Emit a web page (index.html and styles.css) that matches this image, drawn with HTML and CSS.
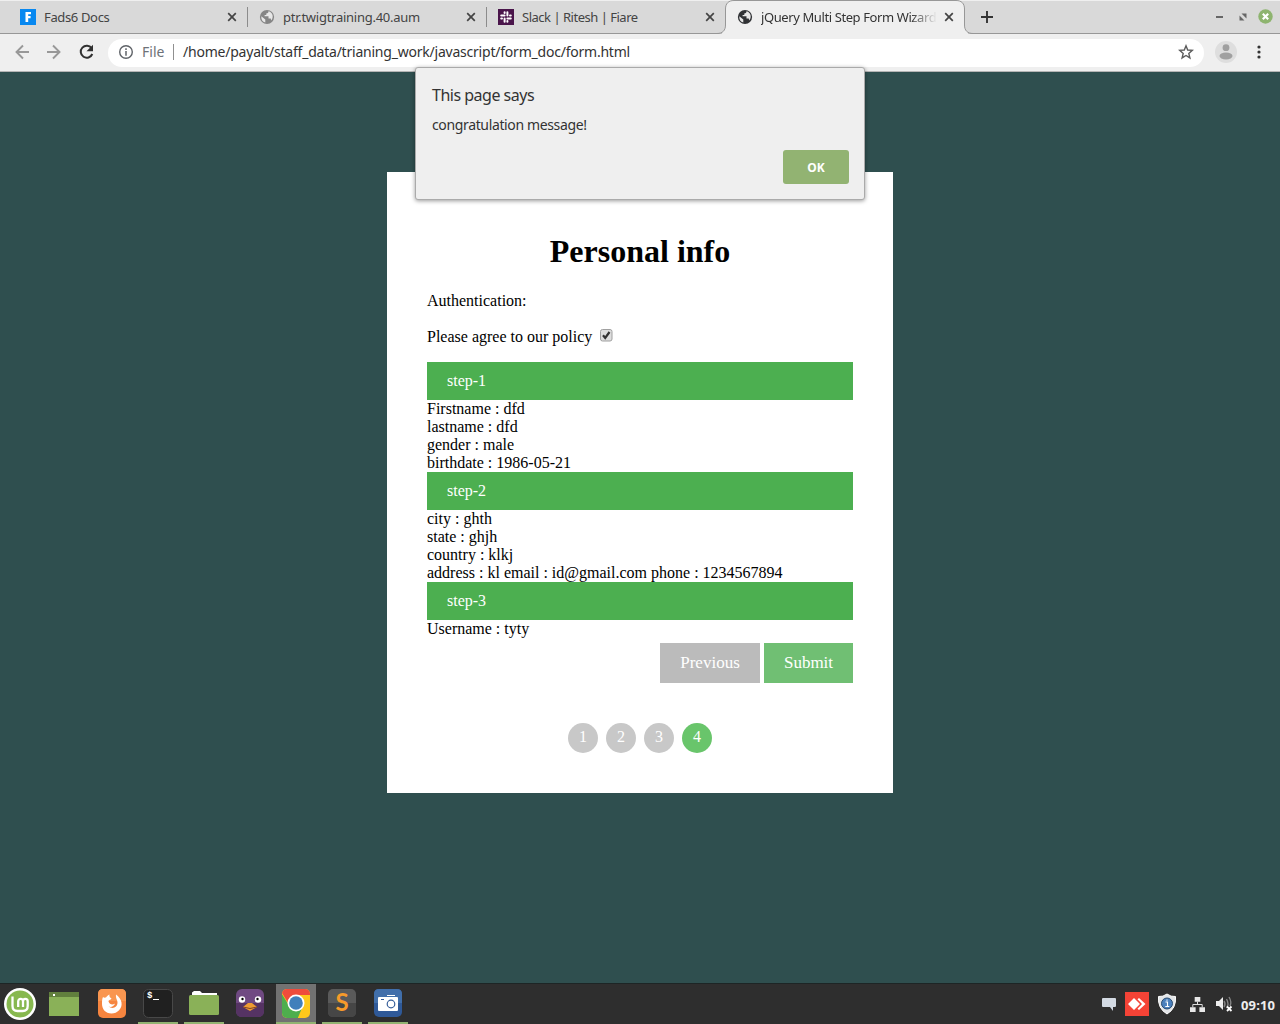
FILE: index.html
```html
<!DOCTYPE html>
<html lang="en">
<head>
<meta charset="utf-8">
<title>jQuery Multi Step Form Wizard</title>
<link rel="stylesheet" href="styles.css">
</head>
<body>
<svg width="0" height="0" class="defs">
  <symbol id="x" viewBox="0 0 10 10"><path d="M1.2 1.2l7.6 7.6M8.8 1.2L1.2 8.8" stroke="currentColor" stroke-width="1.700" fill="none"/></symbol>
  <symbol id="globe" viewBox="0 0 16 16"><circle cx="8" cy="8" r="7.100" fill="currentColor"/><path d="M2.300 7.200 6.300 10.500V13.500C3.600 13 2 10.500 2.300 7.200ZM9.500 2.300C9.500 4 8.500 4.500 7.300 4.500V6H5.600V7.300H9.500V9.600H11.700L12.300 11.500C14 9.500 14.200 6.500 12.800 4.600 12 3.400 10.800 2.600 9.500 2.300Z" fill="#e7e7e7"/></symbol>
</svg>
<header class="tabs">
  <div class="tab"><svg class="fav" viewBox="0 0 16 16"><path fill="#0888f0" d="M0 0h16v16H0z"/><path fill="#fff" d="M5.500 3H11v2.200H8.200v1.900H10.600v2.100H8.200V13H5.500z"/></svg><span class="title t1">Fads6 Docs</span><svg class="close"><use href="#x"/></svg></div>
  <div class="tab"><svg class="fav gray"><use href="#globe"/></svg><span class="title t2">ptr.twigtraining.40.aum</span><svg class="close"><use href="#x"/></svg></div>
  <div class="tab last"><svg class="fav" viewBox="0 0 16 16"><path fill="#4a154b" d="M0 0h16v16H0z"/><path d="M6.600 3.200V4M9.400 3.200V6.600M3.200 6.600H6.600M12 6.600H12.800M3.200 9.400H4M9.400 9.400H12.800M6.600 9.400V12.800M9.400 12V12.800" stroke="#fff" stroke-width="2" stroke-linecap="round"/></svg><span class="title t3">Slack | Ritesh | Fiare</span><svg class="close"><use href="#x"/></svg></div>
  <div class="tab active"><svg class="shape" viewBox="0 0 258 34"><path d="M0 33.500C5.500 33.500 8.500 30.500 8.500 25V9C8.500 3.500 11.500.5 17 .5H239C244.500.5 247.500 3.500 247.500 9V25C247.500 30.500 250.500 33.500 256 33.500" fill="#efefef" stroke="#979797"/><path d="M5 33.500H251" stroke="#efefef"/></svg><svg class="fav dark"><use href="#globe"/></svg><span class="title t4">jQuery Multi Step Form Wizard</span><svg class="close"><use href="#x"/></svg></div>
  <svg class="plus" viewBox="0 0 12 12"><path d="M6 0v12M0 6h12" stroke="#333" stroke-width="1.900"/></svg>
  <svg class="wm" viewBox="0 0 64 20"><path d="M5 10h7" stroke="#666" stroke-width="2"/><path d="M30.500 6.500h5v5zM28.500 8.500v5h5z" fill="#666"/><circle cx="54.500" cy="9.500" r="7.200" fill="#8eb46f"/><path d="M51.800 6.800l5.400 5.400M57.200 6.800l-5.400 5.400" stroke="#fff" stroke-width="2.200"/></svg>
</header>
<nav class="toolbar">
  <svg class="nav" viewBox="0 0 96 24"><g fill="none" stroke="#989898" stroke-width="1.900"><path d="M21 12H8.500M15 5.500L8.500 12l6.500 6.500M39 12h12.500M45 5.500l6.500 6.500-6.500 6.500"/><path stroke="#303030" stroke-width="2" d="M83.600 8.200A6 6 0 1 0 84.300 14"/></g><path fill="#303030" d="M85 4.800v6.500h-6.500z"/></svg>
  <div class="address">
    <svg class="info" viewBox="0 0 16 16"><circle cx="8" cy="8" r="6.300" fill="none" stroke="#5f6368" stroke-width="1.400"/><path d="M8 4.300v1.600M8 7.100v4.600" stroke="#5f6368" stroke-width="1.500"/></svg>
    <span class="scheme">File</span><i class="divider"></i><span class="url">/home/payalt/staff_data/trianing_work/javascript/form_doc/form.html</span>
    <svg class="star" viewBox="0 0 16 16"><path d="M8 1.800l1.700 4.200 4.600.4-3.500 3 1.100 4.500L8 11.500l-3.900 2.400 1.100-4.500-3.500-3 4.600-.4z" fill="none" stroke="#5c5c5c" stroke-width="1.400"/></svg>
  </div>
  <svg class="avatar" viewBox="0 0 22 22"><circle cx="11" cy="11" r="11" fill="#dedede"/><circle cx="11" cy="6.700" r="3.400" fill="#a0a0a0"/><ellipse cx="11" cy="15" rx="6.500" ry="3.400" fill="#a0a0a0"/></svg>
  <svg class="menu" viewBox="0 0 4 14"><circle cx="2" cy="2" r="1.600"/><circle cx="2" cy="7" r="1.600"/><circle cx="2" cy="12" r="1.600"/></svg>
</nav>
<main class="page">
  <form class="wizard">
    <h1>Personal info</h1>
    <p>Authentication:</p>
    <p class="policy">Please agree to our policy <svg class="check" viewBox="0 0 13 13"><rect x=".5" y=".5" width="11.500" height="11.500" rx="2" fill="#dedede" stroke="#a0a0a0"/><path d="M3 6.300l2.200 2.600L9.500 3" fill="none" stroke="#333" stroke-width="2.200"/></svg></p>
    <div class="step">step-1</div>
    <div>Firstname : dfd<br>lastname : dfd<br>gender : male<br>birthdate : 1986-05-21</div>
    <div class="step">step-2</div>
    <div>city : ghth<br>state : ghjh<br>country : klkj<br>address : kl email : id@gmail.com phone : 1234567894</div>
    <div class="step">step-3</div>
    <div>Username : tyty</div>
    <div class="actions"><button type="button" class="prev">Previous</button><button type="button" class="submit">Submit</button></div>
    <div class="dots"><span>1</span><span>2</span><span>3</span><span class="on">4</span></div>
  </form>
</main>
<section class="dialog">
  <h2>This page says</h2>
  <p>congratulation message!</p>
  <button type="button">OK</button>
</section>
<footer class="taskbar">
  <div class="mint"><svg viewBox="0 0 32 32"><circle cx="16" cy="16" r="16" fill="#fff"/><circle cx="16" cy="16" r="13.500" fill="#87b84f"/><path d="M8.500 8.500V18c0 3.400 1.600 5 5 5h5.200c3.400 0 5-1.600 5-5v-4.500c0-3.500-4.700-3.500-4.700 0V19M19 13.500c0-3.500-4.800-3.500-4.800 0V19" fill="none" stroke="#fff" stroke-width="2.300"/></svg></div>
  <div class="app"><svg viewBox="0 0 32 32"><path fill="#8ab158" d="M1 4h30v24H1z"/><path fill="#617f3d" d="M1 4h30v5H1z"/><path fill="#fff" d="M5 6h2v2H5z"/></svg></div>
  <div class="app ff"><svg viewBox="0 0 32 32"><rect x="2" y="1" width="28" height="29" rx="5" fill="#f6853f"/><path d="M2 13V6q0-5 5-5h18q5 0 5 5v7z" fill="#f99650"/><path d="M7 9c1 1 2 .5 3 .5 1-1.500 2-2.500 3.500-3-.5 2 .5 3 2 4-1 2-3 1-3 3 1 3 4 4 6.500 2-1 3-4 4-6.500 3 4 3 9 1 9-4 0-3-2-4-1.500-8 3 2 5 5 5.500 8 1 6-4 11-10 11S6 21 6 16c0-3 0-5 1-7z" fill="#fff"/></svg></div>
  <div class="app open"><svg viewBox="0 0 32 32"><rect x="1.500" y="1.500" width="29" height="28" rx="5" fill="#202020" stroke="#484848"/><text x="5" y="10" class="prompt">$</text><path d="M11 11.500h6" stroke="#fff"/></svg></div>
  <div class="app open"><svg viewBox="0 0 32 32"><path fill="#fff" d="M4 7V4.500L6 3h6l2 2h15v3H4z"/><rect x="1" y="7" width="30" height="20" rx="1.500" fill="#8ab158"/></svg></div>
  <div class="app"><svg viewBox="0 0 32 32"><rect x="2" y="1" width="28" height="28" rx="6" fill="#704a82"/><path d="M2 15h28v8q0 6-6 6H8q-6 0-6-6z" fill="#553363"/><g fill="#fff"><circle cx="8" cy="11.500" r="3.200"/><circle cx="24" cy="11.500" r="3.200"/></g><circle cx="8.500" cy="11" r="1.200"/><circle cx="23.500" cy="11" r="1.200"/><path d="M9 19l5-4h4l5 4-7 4z" fill="#ef9c32"/><path d="M9 19q7 3 14 0" stroke="#7f4429" fill="none"/></svg></div>
  <div class="app open current"><svg viewBox="0 0 32 32"><defs><clipPath id="chrome"><rect x="2" y="1" width="28" height="29" rx="5"/></clipPath></defs><g clip-path="url(#chrome)"><path fill="#fec81b" d="M0 0h32v32H0z"/><path fill="#ef4c3c" d="M0 0h32v7H16l-6 11L2 5z"/><path fill="#4eae4d" d="M0 3l10 16 12 1-5 12H0z"/></g><circle cx="16" cy="15" r="8.500" fill="#fff"/><circle cx="16" cy="15" r="6.800" fill="#417fbb"/></svg></div>
  <div class="app open"><svg viewBox="0 0 32 32"><rect x="2" y="1" width="28" height="28" rx="5" fill="#5a5a5a"/><path d="M2 15h28v9q0 5-5 5H7q-5 0-5-5z" fill="#464646"/><text x="16" y="23" class="subl">S</text></svg></div>
  <div class="app open"><svg viewBox="0 0 32 32"><rect x="2" y="1" width="28" height="28" rx="5" fill="#2f5998"/><path d="M2 15V6q0-5 5-5h18q5 0 5 5v9z" fill="#416fab"/><path fill="#fff" d="M6 10q0-1 1-1h18q1 0 1 1v12q0 1-1 1H7q-1 0-1-1zM15 7h8v1h-8z"/><circle cx="19" cy="16" r="3.800" fill="none" stroke="#345c98" stroke-width="1.200"/><path d="M9 11.500h3" stroke="#345c98"/></svg></div>
  <div class="tray">
    <svg class="chat" viewBox="0 0 14 14"><path fill="#d3dae3" d="M1 1h12q1 0 1 1v7q0 1-1 1h-2v4l-3-4H1q-1 0-1-1V2q0-1 1-1z"/></svg>
    <svg class="desk" viewBox="0 0 24 24"><path fill="#f44336" d="M0 0h24v24H0z"/><path fill="#fff" d="M3 12l6-6 6 6-6 6zM12.500 7.300L14 6l6.500 6-6.500 6-1.500-1.300L17 12z"/></svg>
    <svg class="shield" viewBox="0 0 20 22"><path d="M10 1q4 3 8.500 2.500 1 12-8.500 17.500Q.5 15.500 1.500 3.500 6 4 10 1z" fill="#e2e5e8" stroke="#fff"/><circle cx="10" cy="10.500" r="5.500" fill="#4a80bd" stroke="#294c71"/><path d="M8.500 9h2v4.500M8.300 13.500h4M10 6.500v1.300" fill="none" stroke="#fff" stroke-width="1.100"/></svg>
    <svg class="lan" viewBox="0 0 16 16"><path fill="#e8e8e8" d="M5 0h6v5H5zM0 11h6v5H0zM10 11h6v5h-6z"/><path d="M8 5v3M3 11V8h10v3" fill="none" stroke="#e8e8e8"/></svg>
    <svg class="sound" viewBox="0 0 18 16"><path fill="#eee" d="M1 5h3l4-4v13l-4-4H1z"/><path d="M9 5q2 3 0 6M11.500 3q3 5 0 9M14 1q3 5 1 9" fill="none" stroke="#858585" stroke-width="1.400"/><path d="M12 10.500l4.500 4.500M16.500 10.500L12 15" stroke="#fff" stroke-width="1.800"/></svg>
    <span class="clock">09:10</span>
  </div>
</footer>
</body>
</html>
```
FILE: styles.css
```css
* { box-sizing: border-box; }
body { margin: 0; width: 1280px; height: 1024px; overflow: hidden; display: flex; flex-direction: column; position: relative; font-family: "Noto Sans", sans-serif; background: #2f4f4f; }
svg { display: block; flex: none; }
.defs { position: absolute; }
.tabs { height: 34px; flex: none; display: flex; align-items: center; padding-left: 8px; background: #d9d9d9; border-top: 1px solid #efefef; border-bottom: 1px solid #979797; }
.tab { width: 239px; height: 32px; display: flex; align-items: center; padding: 0 10px 0 12px; position: relative; }
.tab::after { content: ""; position: absolute; right: -1px; top: 6px; width: 1px; height: 20px; background: #8c8c8c; }
.tab.last::after, .tab.active::after { display: none; }
.active { width: 240px; padding-right: 11px; z-index: 1; }
.shape { position: absolute; left: -8px; top: -1px; width: 258px; height: 34px; overflow: visible; }
.fav { width: 16px; height: 16px; position: relative; }
.gray { color: #858585; }
.dark { color: #303235; }
.title { flex: 1; margin-left: 8px; position: relative; font-size: 13px; line-height: 20px; white-space: nowrap; overflow: hidden; color: #444; letter-spacing: -.35px; }
.t2 { letter-spacing: -.26px; }
.t3 { letter-spacing: -.49px; }
.t4 { color: #333; letter-spacing: -.4px; -webkit-mask-image: linear-gradient(90deg, #000 150px, transparent 176px); mask-image: linear-gradient(90deg, #000 150px, transparent 176px); }
.close { width: 10px; height: 10px; position: relative; color: #444; }
.plus { width: 12px; height: 12px; margin-left: 16px; }
.wm { width: 64px; height: 20px; margin: 0 5px 0 auto; }
.toolbar { height: 38px; flex: none; display: flex; align-items: center; background: #efefef; border-bottom: 1px solid #b5b5b5; }
.nav { width: 96px; height: 24px; margin: 0 4px 2px 8px; }
.address { width: 1096px; height: 28px; border-radius: 14px; background: #fff; display: flex; align-items: center; padding: 0 10px; font-size: 14px; line-height: 20px; white-space: nowrap; }
.info { width: 16px; height: 16px; margin-bottom: 2px; }
.scheme { width: 31px; margin: -2px 0 0 8px; color: #6e7278; }
.divider { width: 1px; height: 16px; margin: 0 9px 1px 0; background: #909090; }
.url { margin-top: -2px; color: #333; letter-spacing: -.22px; }
.star { width: 16px; height: 16px; margin: -2px 0 0 auto; }
.avatar { width: 22px; height: 22px; margin-left: 11px; margin-bottom: 1px; }
.menu { width: 4px; height: 14px; margin: 0 0 1px 19.5px; fill: #333; }
.page { flex: 1; padding-top: 100px; }
.wizard { width: 506px; height: 621px; margin: 0 auto; padding: 61px 40px 0; background: #fff; color: #000; font: 16px/18px "Liberation Serif", serif; }
h1 { margin: 0 0 22px; text-align: center; font-size: 32px; line-height: 37px; }
.wizard p { margin: 0 0 18px; }
.wizard .policy { margin-bottom: 16px; display: flex; }
.check { width: 13px; height: 13px; margin: 1px 0 0 7.5px; }
.step { height: 38px; padding: 10px 20px; background: #4caf50; color: #fff; }
.actions { display: flex; justify-content: flex-end; gap: 4px; margin-top: 5px; }
.actions button { height: 40px; padding: 0; border: 0; color: #fff; font: 17px "Liberation Serif", serif; }
.prev { width: 100px; background: #bbb; }
.submit { width: 89px; background: #70bf73; }
.dots { display: flex; justify-content: center; gap: 8px; margin-top: 40px; }
.dots span { width: 30px; height: 30px; padding-top: 5px; border-radius: 50%; text-align: center; background: #c8c8c8; color: #fff; }
.dots .on { background: #69c56b; }
.dialog { position: absolute; left: 415px; top: 67px; width: 450px; height: 133px; padding: 17px 15px 0 16px; background: #efefef; border: 1px solid #aaa; border-radius: 3px; box-shadow: 0 1px 4px rgba(0,0,0,.4); color: #333; display: flex; flex-direction: column; z-index: 2; }
.dialog h2 { margin: 0; font-size: 16px; font-weight: 400; line-height: 21px; letter-spacing: -.5px; }
.dialog p { margin: 9px 0 0; font-size: 14px; line-height: 19px; letter-spacing: -.36px; }
.dialog button { width: 66px; height: 34px; margin: 16px 0 0 auto; border: 0; border-radius: 3px; background: #92b372; color: #fff; font: 700 12px "Noto Sans", sans-serif; }
.taskbar { height: 41px; flex: none; display: flex; background: #2e2e2e; border-top: 1px solid #1d2525; }
.mint { width: 41px; padding: 4px 0 0 4px; }
.mint svg { width: 32px; height: 32px; }
.app { width: 40px; height: 40px; margin-right: 6px; padding: 4px 4px 0; }
.mint + .app { margin: 0 8px 0 3px; }
.app svg { width: 32px; height: 32px; }
.open { border-bottom: 2px solid #92b372; }
.current { background: #727272; }
.prompt { font: 700 9px "Liberation Mono", monospace; fill: #fff; }
.subl { font: 700 24px Lato, sans-serif; fill: #f79a2a; text-anchor: middle; }
.tray { display: flex; align-items: center; margin-left: auto; padding-right: 4px; }
.chat { width: 14px; height: 14px; margin-right: 9px; }
.desk { width: 24px; height: 24px; margin-right: 8px; }
.shield { width: 20px; height: 22px; margin-right: 13px; }
.lan { width: 15px; height: 15px; margin-right: 10px; }
.sound { width: 18px; height: 16px; margin-right: 8px; }
.clock { width: 35px; margin-top: 2px; color: #eee; font-size: 13px; font-weight: 700; line-height: 20px; letter-spacing: .15px; white-space: nowrap; }
```
